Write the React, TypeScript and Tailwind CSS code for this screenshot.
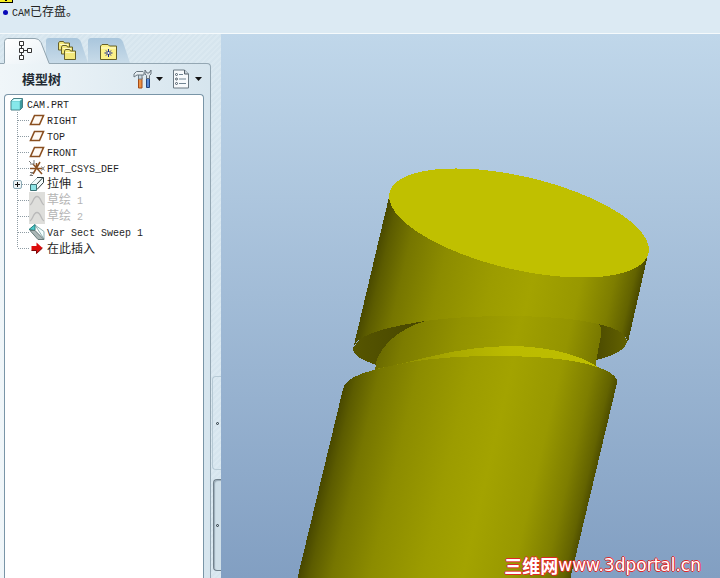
import type { ReactNode } from "react";

type TreeRow = {
  id: string;
  name: ReactNode;
  icon: ReactNode;
  dimmed?: boolean;
  expandable?: boolean;
};

function Latin({ children }: { children: ReactNode }) {
  return <span className="font-['Liberation_Mono',monospace] text-[10px] whitespace-pre">{children}</span>;
}

function PartIcon() {
  return (
    <svg width="14" height="14" viewBox="0 0 14 14" aria-hidden="true">
      <path d="M1 4 3.500 1.500H12.500v9L10 13H1z" fill="#3d9a9e" stroke="#4a7f86" />
      <path d="M1.500 4 4 2h8L9.800 4z" fill="#d5ffff" />
      <path d="M1.500 4.200H9.800v8.300H1.500z" fill="#86e8ea" />
    </svg>
  );
}

function PlaneIcon() {
  return (
    <svg width="16" height="16" viewBox="0 0 16 16" aria-hidden="true">
      <path d="M5.500 3.500h9l-4 9h-9z" fill="#fffaf4" stroke="#8a4f20" strokeWidth="1.600" />
    </svg>
  );
}

function CsysIcon() {
  return (
    <svg width="16" height="16" viewBox="0 0 16 16" aria-hidden="true">
      <path d="M1 8.500h12M4 4l9 10M11 2 4 14M7.500 3v4" stroke="#8a4f20" strokeWidth="1.500" fill="none" />
      <path d="M0 1l2 2M5 0v4H1M12.500 6.500l3 4M15.500 6.500l-3 4M1 12.500h3L1 15.500h3" stroke="#777" fill="none" />
    </svg>
  );
}

function ExtrudeIcon() {
  return (
    <svg width="16" height="16" viewBox="0 0 16 16" aria-hidden="true">
      <path d="M1.500 8.500 8.500 1.500h6v5l-7 7.500z" fill="#f2fafa" />
      <path d="M1.500 8.500l7-7" stroke="#9fb4b8" />
      <path d="M8 1.500h6.500V6.500l-6.500 7M7.500 8.500l6.500-7" fill="none" stroke="#2a3638" />
      <path d="M1.500 8.500h6v6h-6z" fill="#8ce4e6" stroke="#3b7275" />
    </svg>
  );
}

function SketchIcon() {
  return (
    <svg width="16" height="16" viewBox="0 0 16 16" aria-hidden="true">
      <path d="M0 0h16v16H0z" fill="#dededb" />
      <path d="M1 13C4 12 4 4.500 8 4.500S12 12 15 13" stroke="#bababa" strokeWidth="1.300" fill="none" />
    </svg>
  );
}

function SweepIcon() {
  return (
    <svg width="16" height="16" viewBox="0 0 16 16" aria-hidden="true">
      <path d="M6 1l9 6.500V15z" fill="#f3ffff" stroke="#8fb0b2" />
      <path d="M0 5.500 6 .5v6z" fill="#4ccaca" stroke="#257c7c" />
      <path d="M1 6.500 6 6.500 15 15.500H9z" fill="#aab6b6" stroke="#657a7a" />
    </svg>
  );
}

function InsertIcon() {
  return (
    <svg width="16" height="16" viewBox="0 0 16 16" aria-hidden="true">
      <path d="M2.500 6h5V2.500L13.500 8 7.500 13.500V10.500h-5z" fill="#dc0c0c" />
      <path d="M2.500 10.500h5v3l6-5.500" stroke="#7c0808" fill="none" />
    </svg>
  );
}

const rows: TreeRow[] = [
  { id: "right", name: <Latin>RIGHT</Latin>, icon: <PlaneIcon /> },
  { id: "top", name: <Latin>TOP</Latin>, icon: <PlaneIcon /> },
  { id: "front", name: <Latin>FRONT</Latin>, icon: <PlaneIcon /> },
  { id: "csys", name: <Latin>PRT_CSYS_DEF</Latin>, icon: <CsysIcon /> },
  { id: "extrude", name: <>拉伸<Latin> 1</Latin></>, icon: <ExtrudeIcon />, expandable: true },
  { id: "sketch1", name: <>草绘<Latin> 1</Latin></>, icon: <SketchIcon />, dimmed: true },
  { id: "sketch2", name: <>草绘<Latin> 2</Latin></>, icon: <SketchIcon />, dimmed: true },
  { id: "sweep", name: <Latin>Var Sect Sweep 1</Latin>, icon: <SweepIcon /> },
  { id: "insert", name: "在此插入", icon: <InsertIcon /> },
];

// Dotted connector to the left of each feature
function Branch({ last }: { last: boolean }) {
  return (
    <svg width="24" height="16" viewBox="0 0 24 16" aria-hidden="true">
      <path d={last ? "M12.5 0v8" : "M12.5 0v16"} stroke="#8e9ba3" strokeDasharray="1 1" />
      <path d="M13 8.500h11" stroke="#8e9ba3" strokeDasharray="1 1" />
    </svg>
  );
}

function FolderTab({ label, children }: { label: string; children: ReactNode }) {
  return (
    <button type="button" role="tab" aria-selected={false} aria-label={label} className="block">
      <svg width="42" height="25" viewBox="0 0 42 25">
        <path d="M0 25V3q0-3 3-3h27q3 0 5 4l7 21z" fill="url(#tabFill)" />
        {children}
      </svg>
    </button>
  );
}

function Tabs() {
  return (
    <div role="tablist" className="flex pl-1 pt-1">
      <button type="button" role="tab" aria-selected aria-label="模型树" className="relative z-10 block">
        <svg width="42" height="25" viewBox="0 0 42 25" className="overflow-visible">
          <defs>
            <linearGradient id="activeFill" x1="0" y1="0" x2="1" y2="1">
              <stop offset="0" stopColor="#fff" />
              <stop offset="1" stopColor="#e9f1f6" />
            </linearGradient>
            <linearGradient id="tabFill" x1="0" y1="0" x2="0" y2="1">
              <stop offset="0" stopColor="#a9c6dc" />
              <stop offset="1" stopColor="#c8dbe9" />
            </linearGradient>
          </defs>
          <path d="M.5 26V3.500q0-3 3-3H31q4 0 6 4L45 26z" fill="url(#activeFill)" />
          <path d="M.5 25V3.500q0-3 3-3H31q4 0 6 4L45 25" fill="none" stroke="#91a4af" />
          <path d="M17.500 8v2M17.500 15v2M20 12.500h3" stroke="#333" />
          <path d="M15.500 3.500h4v4h-4zM15.500 10.500h4v4h-4zM15.500 17.500h4v4h-4zM23.500 10.500h4v4h-4z" fill="#fff" stroke="#333" />
        </svg>
      </button>
      <FolderTab label="文件夹浏览器">
        <g fill="#f3e87c" stroke="#66602a">
          <path d="M12.500 12V5l1-1.500h4l1 1.500h5v7z" />
          <path d="M15.500 16V9l1-1.500h4l1 1.500h5v7z" />
          <path d="M18.500 21.500V13l1-1.500h4l1 1.500h5v8.500z" />
        </g>
        <path d="M19.500 14.500h9M14 6.500h8M17 10.500h8" stroke="#fffbc6" />
      </FolderTab>
      <FolderTab label="收藏夹">
        <path d="M12.500 21.500V8l1.500-1.500h6L21.500 8h7v13.500z" fill="#fbf188" stroke="#66602a" />
        <path d="M13 10h15" stroke="#fffdce" />
        <path d="M20.500 11v8M16.500 15h8M18 12.500l5 5M23 12.500l-5 5" stroke="#17258d" />
        <circle cx="20.500" cy="15" r="1" fill="#fff" />
      </FolderTab>
    </div>
  );
}

function Caret() {
  return (
    <svg width="7" height="4" viewBox="0 0 7 4" aria-hidden="true">
      <path d="M0 0h7L3.500 4z" fill="#111" />
    </svg>
  );
}

function TreeHeader() {
  return (
    <header className="flex h-[30px] items-center pl-[22px] pr-2 shrink-0">
      <h1 className="text-[13px] leading-4 font-bold text-[#222b33]">模型树</h1>
      <button type="button" aria-label="设置" className="ml-auto flex items-center gap-1">
        <svg width="19" height="20" viewBox="0 0 19 20" aria-hidden="true">
          <path d="M5.500 8.500h3.500v10.500h-3.500z" fill="#ee9144" stroke="#a24b18" />
          <path d="M5.500 5h3.500v5h-3.500z" fill="#c9d6df" stroke="#6f7d87" />
          <path d="M1 8V5l2.500-2.500H10l1 1v2.500H4z" fill="#e6edf1" stroke="#6a7882" />
          <path d="M13.500 9h3v9.500h-3z" fill="#5b8ad4" stroke="#24437c" />
          <path d="M12 1v4l1.500 1.500v3h3v-3L18 5V1l-2 3h-2z" fill="#dce3e8" stroke="#66737d" />
        </svg>
        <Caret />
      </button>
      <button type="button" aria-label="显示" className="ml-[10px] flex items-center gap-[6px]">
        <svg width="16" height="20" viewBox="0 0 16 20" aria-hidden="true">
          <path d="M.5 1h11L15.500 5v14H.5z" fill="#f7fafc" stroke="#6a7882" />
          <path d="M11.500 1v4h4" fill="#c7d0d7" stroke="#53616c" />
          <path d="M6 5.500h4M6 10h7M6 14.500h7" stroke="#708493" />
          <g fill="#fff" stroke="#4b5964">
            <circle cx="3.500" cy="5.500" r="1" />
            <circle cx="3.500" cy="10" r="1" />
            <circle cx="3.500" cy="14.500" r="1" />
          </g>
        </svg>
        <Caret />
      </button>
    </header>
  );
}

function ModelTree() {
  return (
    <div className="ml-1 mr-[6px] flex-1 rounded-t border border-b-0 border-[#7995a7] bg-white pt-px text-xs leading-4 text-[#1f1f1f]">
      <ul role="tree" aria-label="模型树">
        <li role="treeitem" aria-expanded>
          <div className="flex h-4 items-center gap-[3px] pl-[5px]">
            <PartIcon />
            <span><Latin>CAM.PRT</Latin></span>
          </div>
          <ul role="group">
            {rows.map((row, i) => (
              <li key={row.id} role="treeitem" className="relative flex h-4 items-center">
                <Branch last={i === rows.length - 1} />
                {row.expandable && (
                  <button type="button" aria-label="展开" className="absolute left-2 top-1 block">
                    <svg width="9" height="9" viewBox="0 0 9 9">
                      <rect x=".5" y=".5" width="8" height="8" rx="1.500" fill="#eef4f6" stroke="#8ba9b5" />
                      <path d="M2 4.500h5M4.500 2v5" stroke="#111" />
                    </svg>
                  </button>
                )}
                {row.icon}
                <span className={`ml-[2px] whitespace-nowrap ${row.dimmed ? "text-[#b4b4b4]" : ""}`}>{row.name}</span>
              </li>
            ))}
          </ul>
        </li>
      </ul>
    </div>
  );
}

function Sash() {
  return (
    <div className="flex w-[10px] shrink-0 flex-col items-end justify-end gap-[9px] pb-[7px]">
      <button type="button" aria-label="浏览器" className="flex h-[94px] w-[9px] items-center justify-center rounded-l border border-r-0 border-[#b7cad5]">
        <span className="size-[3px] rounded-full border border-[#26333b]" />
      </button>
      <button type="button" aria-label="导航器" className="flex h-[92px] w-2 items-center justify-center rounded-l border border-r-0 border-[#71818c] bg-[#cfdfe8] shadow-[inset_1px_1px_1px_#9aabb7]">
        <span className="size-[3px] rounded-full border border-[#26333b]" />
      </button>
    </div>
  );
}

function Viewport() {
  return (
    <main className="relative min-w-0 flex-1 overflow-hidden bg-linear-to-b from-[#c0d7ea] to-[#829fc2]">
      <svg className="absolute inset-0 size-full" viewBox="221 34 499 544" preserveAspectRatio="xMidYMid slice" shapeRendering="crispEdges" role="img" aria-label="CAM.PRT">
        <defs>
          <linearGradient id="shaft" gradientUnits="userSpaceOnUse" x1="352" y1="350" x2="611" y2="411">
            <stop offset="0" stopColor="#484800" />
            <stop offset="0.040" stopColor="#5c5c00" />
            <stop offset="0.120" stopColor="#767600" />
            <stop offset="0.260" stopColor="#8c8c00" />
            <stop offset="0.450" stopColor="#9c9c00" />
            <stop offset="0.600" stopColor="#a3a300" />
            <stop offset="0.780" stopColor="#989800" />
            <stop offset="0.900" stopColor="#7e7e00" />
            <stop offset="0.970" stopColor="#636300" />
            <stop offset="1" stopColor="#4b4b00" />
          </linearGradient>
          <linearGradient id="neck" gradientUnits="userSpaceOnUse" x1="380" y1="320" x2="602" y2="372">
            <stop offset="0" stopColor="#656500" />
            <stop offset="0.120" stopColor="#7c7c00" />
            <stop offset="0.350" stopColor="#929200" />
            <stop offset="0.600" stopColor="#a0a000" />
            <stop offset="0.820" stopColor="#949400" />
            <stop offset="1" stopColor="#707000" />
          </linearGradient>
          <linearGradient id="underside" x1="0" y1="0" x2="1" y2="0">
            <stop offset="0" stopColor="#565500" />
            <stop offset="0.300" stopColor="#454400" />
            <stop offset="0.850" stopColor="#454400" />
            <stop offset="1" stopColor="#626100" />
          </linearGradient>
          <linearGradient id="lip" x1="0" y1="0" x2="1" y2="0">
            <stop offset="0" stopColor="#858500" />
            <stop offset="0.350" stopColor="#aaaa00" />
            <stop offset="0.600" stopColor="#bbbb00" />
            <stop offset="1" stopColor="#bebe00" />
          </linearGradient>
        </defs>
        {/* underside of the head */}
        <path d="M353 348C353 356 364 361 377 365L596 360C614 356 627 349 627 341L620 325L590 310L425 310L370 325z" fill="url(#underside)" />
        {/* neck */}
        <path d="M375 372L376 362C381 347 396 330 425 321C465 313 555 313 597 323Q603 327 601 335L596 362V370L480 380z" fill="url(#neck)" />
        {/* head */}
        <path d="M389 197L353 349C355 337 375 329 425 321C475 314 560 314 598 324C616 328 626 333 628 342L649 250z" fill="url(#shaft)" />
        <ellipse cx="519" cy="223" rx="133" ry="46.500" transform="rotate(13.200 519 223)" fill="#c0c000" />
        {/* lip and shaft */}
        <path d="M376 369C420 361 455 346 515 346C550 347 580 355 598 367L490 372z" fill="url(#lip)" />
        <path d="M296 584L343 389C345 376 370 370 405 363C450 354 530 354 573 361C600 366 619 374 617 383L569 584z" fill="url(#shaft)" />
      </svg>
      <a
        href="#"
        className="absolute right-[19px] bottom-[3px] flex items-center whitespace-nowrap font-['DejaVu_Sans',sans-serif] text-[17px] leading-5 text-white [text-shadow:1px_0_#e02828,-1px_0_#e02828,0_1px_#e02828,0_-1px_#e02828]"
      >
        <span className="font-['Noto_Sans_CJK_SC',sans-serif] text-[18px] font-bold">三维网</span>
        www.3dportal.cn
      </a>
    </main>
  );
}

export default function App() {
  return (
    <div className="flex h-screen flex-col overflow-hidden bg-[#d9e8f1] font-['Noto_Sans_CJK_SC',sans-serif]">
      <div className="relative flex h-[34px] shrink-0 items-start border-b border-[#f5fafc] bg-[#dceaf3] pl-[3px] pt-[3px]">
        <span className="absolute left-0 top-0 h-[3px] w-[13px] border-r border-b border-black bg-[#f6ee22]">
          <span className="absolute left-[5px] top-0 h-px w-[2px] bg-black" />
        </span>
        <p role="status" className="flex items-center gap-1 text-xs leading-4 text-[#222]">
          <span className="size-[5px] rounded-full bg-[#0808b8]" />
          <span><Latin>CAM</Latin>已存盘。</span>
        </p>
      </div>
      <div className="flex min-h-0 flex-1">
        <aside className="flex w-[221px] shrink-0 bg-[repeating-linear-gradient(135deg,#d6e5ee_0px,#d6e5ee_2px,#dbe9f1_2px,#dbe9f1_4px)]">
          <div className="flex min-w-0 flex-1 flex-col">
            <Tabs />
            <section className="flex min-h-0 flex-1 flex-col rounded-tr border-t border-r border-[#94a7b3] bg-linear-to-r from-[#f0f6f9] to-[#d6e5ee]">
              <TreeHeader />
              <ModelTree />
            </section>
          </div>
          <Sash />
        </aside>
        <Viewport />
      </div>
    </div>
  );
}
